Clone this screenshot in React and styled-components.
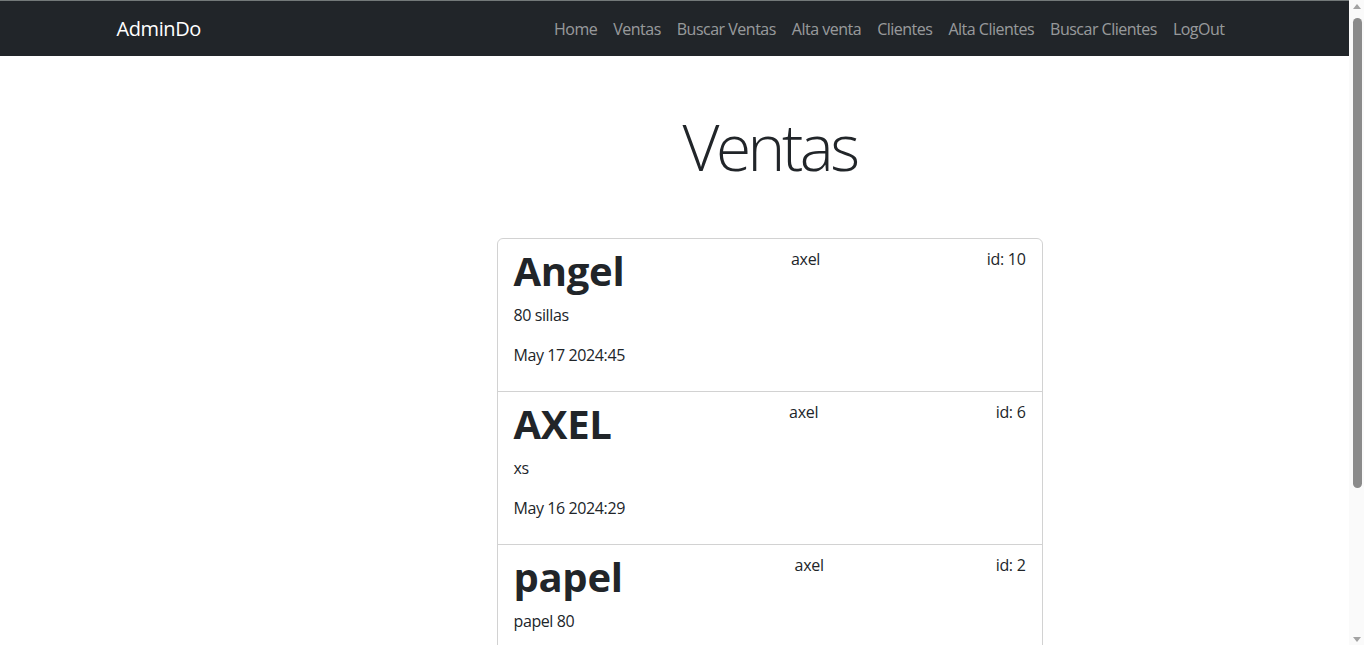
import React from 'react';
import styled, { createGlobalStyle } from 'styled-components';

const ventas = [
  { id: 10, producto: 'Angel', usuario: 'axel', detalle: '80 sillas', fecha: 'May 17 2024:45' },
  { id: 6, producto: 'AXEL', usuario: 'axel', detalle: 'xs', fecha: 'May 16 2024:29' },
  { id: 2, producto: 'papel', usuario: 'axel', detalle: 'papel 80', fecha: 'May 15 2024:12' },
  { id: 1, producto: 'mesa', usuario: 'axel', detalle: '4 mesas', fecha: 'May 14 2024:08' },
];

const links = ['Home', 'Ventas', 'Buscar Ventas', 'Alta venta', 'Clientes', 'Alta Clientes', 'Buscar Clientes', 'LogOut'];

const GlobalStyle = createGlobalStyle`
  * { box-sizing: border-box; }
  body {
    margin: 0;
    font-family: "Open Sans", "Noto Sans", sans-serif;
    font-size: 16px;
    line-height: 1.5;
    color: #212529;
    background: #fff;
  }
`;

const Page = styled.div`
  width: calc(100% - 15px);
`;

/* fake window scrollbar, sits over the right edge */
const ScrollRail = styled.div`
  position: fixed;
  top: 0;
  right: 0;
  width: 15px;
  height: 100vh;
  background: #fafafa;
  display: flex;
  flex-direction: column;
  align-items: center;
  padding: 4px 0 3px;
`;

const Arrow = styled.div`
  width: 0;
  height: 0;
  border-left: 4px solid transparent;
  border-right: 4px solid transparent;
  ${p => p.down
    ? 'border-top: 5px solid #a3a3a3; margin-top: auto;'
    : 'border-bottom: 5px solid #a3a3a3;'}
`;

const Thumb = styled.div`
  width: 9px;
  height: 470px;
  margin-top: 9px;
  margin-left: 1px;
  border-radius: 5px;
  background: #8b8b8b;
`;

const Navbar = styled.nav`
  background: #212529;
  border-top: 1px solid #737979;
  height: 56px;
  display: flex;
  align-items: center;
`;

const Container = styled.div`
  width: 1140px;
  margin: 0 auto;
  padding: 0 12px;
`;

const NavInner = styled(Container)`
  display: flex;
  align-items: center;
  justify-content: space-between;
`;

const Brand = styled.a`
  color: #fff;
  font-size: 20px;
  line-height: 30px;
  padding: 5px 0;
  text-decoration: none;
  letter-spacing: -0.4px;
`;

const NavLinks = styled.ul`
  display: flex;
  list-style: none;
  margin: 0;
  padding: 0;
`;

const NavLink = styled.a`
  display: block;
  padding: 8px;
  color: rgba(255, 255, 255, 0.55);
  text-decoration: none;
  letter-spacing: -0.5px;
`;

const Row = styled(Container)`
  display: flex;
`;

const Col = styled.div`
  width: 570px;
  margin-left: 368px;
  padding: 0 12px;
`;

const Title = styled.h1`
  margin: 53px 0 52px;
  font-size: 64px;
  font-weight: 300;
  line-height: 1.2;
  text-align: center;
  letter-spacing: -3.5px;
`;

const Card = styled.div`
  border: 1px solid rgba(0, 0, 0, 0.175);
  border-radius: 6px;
  margin-bottom: 4px;
`;

const Item = styled.div`
  padding: 8px 16px;
  & + & { border-top: 1px solid rgba(0, 0, 0, 0.175); }
`;

const ItemHead = styled.div`
  display: flex;
  justify-content: space-between;
`;

const Producto = styled.h2`
  margin: 0 0 8px;
  font-size: 40px;
  font-weight: 700;
  line-height: 1.2;
  letter-spacing: -0.3px;
`;

const Meta = styled.span`
  font-size: 16px;
  letter-spacing: -0.3px;
`;

const Text = styled.p`
  margin: 0 0 16px;
  letter-spacing: -0.4px;
`;

export default function App() {
  return (
    <>
      <GlobalStyle />
      <Page>
        <Navbar>
          <NavInner>
            <Brand href="#">AdminDo</Brand>
            <NavLinks>
              {links.map(l => (
                <li key={l}><NavLink href="#">{l}</NavLink></li>
              ))}
            </NavLinks>
          </NavInner>
        </Navbar>
        <Row>
          <Col>
            <Title>Ventas</Title>
            <Card>
              {ventas.map(({ id, producto, usuario, detalle, fecha }) => (
                <Item key={id}>
                  <ItemHead>
                    <Producto>{producto}</Producto>
                    <Meta>{usuario}</Meta>
                    <Meta>id: {id}</Meta>
                  </ItemHead>
                  <Text>{detalle}</Text>
                  <Text>{fecha}</Text>
                </Item>
              ))}
            </Card>
          </Col>
        </Row>
      </Page>
      <ScrollRail>
        <Arrow />
        <Thumb />
        <Arrow down />
      </ScrollRail>
    </>
  );
}
